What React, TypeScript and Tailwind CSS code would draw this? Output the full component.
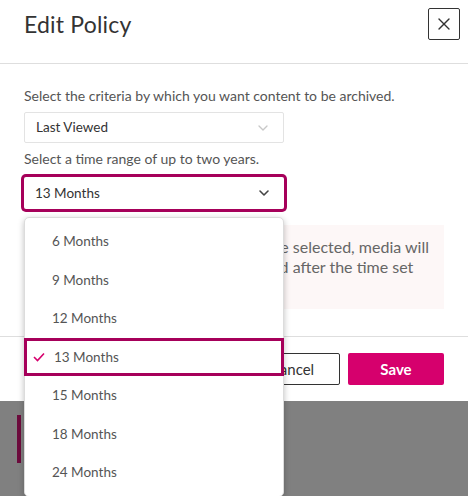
import { X, ChevronDown } from 'lucide-react';

const options = ['6 Months', '9 Months', '12 Months', '13 Months', '15 Months', '18 Months', '24 Months'];

export default function App() {
  const selected = '13 Months';

  return (
    <div className="relative w-[468px] h-[496px] overflow-hidden bg-[#808080] font-['Lato',sans-serif]">
      {/* modal */}
      <div className="bg-white">
        <div className="flex items-center justify-between h-[64px] pl-6 pr-2 border-b border-[#dedede]">
          <h1 className="text-[23px] text-[#333] -mt-[15px] tracking-[0.2px]">Edit Policy</h1>
          <button className="w-[32px] h-[32px] -mt-[16px] flex items-center justify-center border border-[#333] rounded-[2px] text-[#333]">
            <X size={20} strokeWidth={1.6} />
          </button>
        </div>

        <div className="px-6 pt-[24px] pb-[27px]">
          <p className="text-[14px] leading-4 text-[#555]">Select the criteria by which you want content to be archived.</p>
          <div className="mt-2 w-[260px] h-[31px] flex items-center justify-between pl-[11px] pr-[12px] border border-[#e3e3e3] rounded-[2px] text-[13.5px] text-[#333]">
            <span>Last Viewed</span>
            <ChevronDown size={16} strokeWidth={2} className="text-[#c8c8c8]" />
          </div>
          <p className="mt-[8px] text-[14px] leading-4 text-[#555]">Select a time range of up to two years.</p>
          <div className="mt-[10px] w-[260px] h-[32px] flex items-center justify-between pl-[11px] pr-[12px] rounded-[2px] ring-[3px] ring-[#a6005a] text-[13.5px] text-[#333]">
            <span>{selected}</span>
            <ChevronDown size={16} strokeWidth={2.4} className="text-[#444]" />
          </div>
          <div className="mt-[16px] h-[84px] bg-[#fdf7f7] pl-3 pr-4 pt-[12px] text-[16px] leading-[20px] text-[#666] whitespace-nowrap">
            <div>Once the criteria and time range are selected, media will</div>
            <div>be automatically saved and archived after the time set</div>
            <div>has passed.</div>
          </div>
        </div>

        <div className="flex justify-end gap-2 px-6 py-4 border-t border-[#dedede]">
          <button className="w-[96px] h-[32px] border border-[#333] rounded-[2px] text-[15px] text-[#333]">Cancel</button>
          <button className="w-[96px] h-[32px] bg-[#d6006d] rounded-[2px] text-[15px] font-bold text-white">Save</button>
        </div>
      </div>

      {/* dimmed page behind */}
      <div className="pl-[17px] pt-[14px]">
        <div className="w-[4px] h-[48px] bg-[#6d0b3d]" />
      </div>

      {/* open dropdown */}
      <ul className="absolute left-[24px] top-[217px] w-[260px] pt-[4px] pb-[4px] bg-white border border-[#dcdcdc] rounded-[5px] shadow-[0_2px_6px_rgba(0,0,0,0.25)]">
        {options.map((o) => (
          <li
            key={o}
            className={`relative flex items-center h-[38.5px] pl-[27px] text-[13.5px] text-[#555] ${
              o === selected ? 'border-[3px] border-[#a6005a] -mx-px pl-[25px]' : ''
            }`}
          >
            {o === selected && (
              <svg width="12" height="10" viewBox="0 0 12 10" className="absolute left-[6px]">
                <polyline points="1,5 4.5,8.5 11,1.5" fill="none" stroke="#d6006d" strokeWidth="1.6" />
              </svg>
            )}
            {o}
          </li>
        ))}
      </ul>
    </div>
  );
}
